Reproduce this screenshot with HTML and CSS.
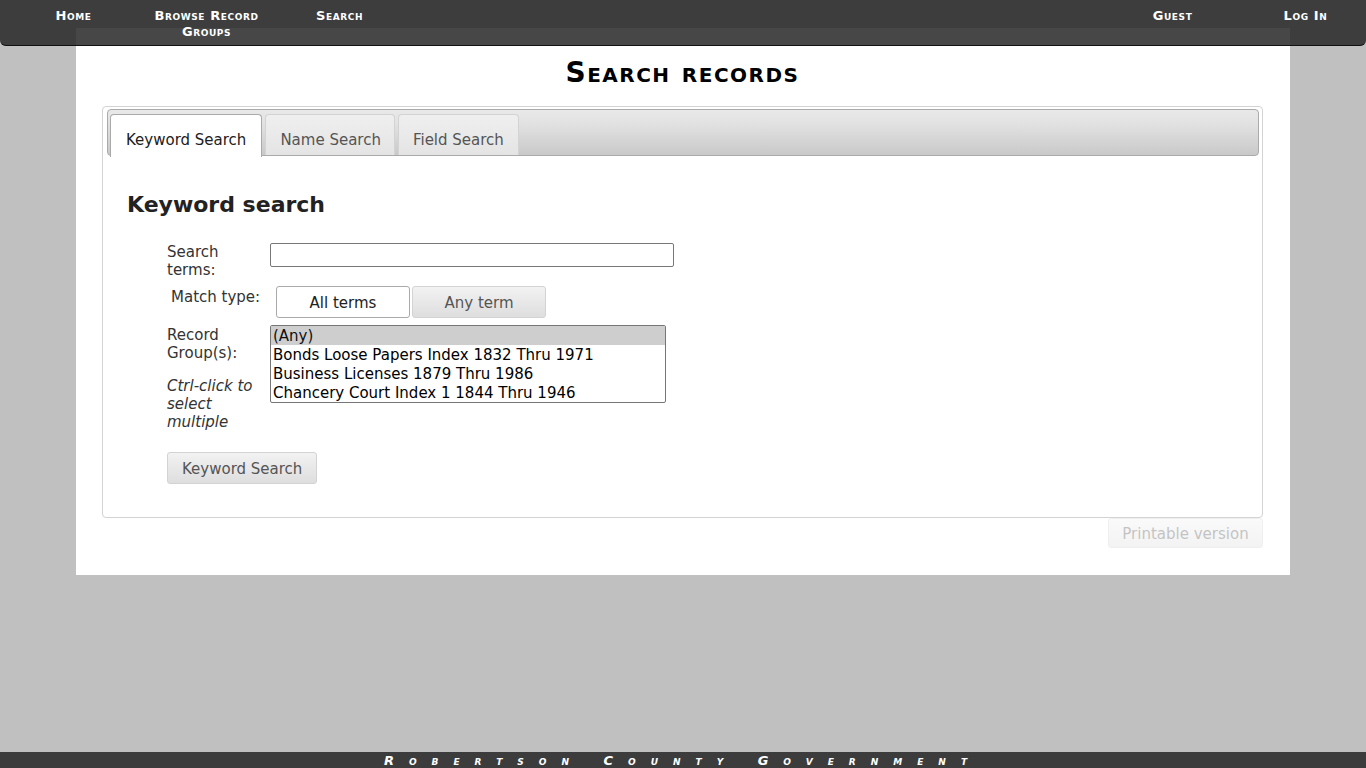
FILE: index.html
```html
<!DOCTYPE html>
<html lang="en">
<head>
<meta charset="utf-8">
<title>Search records</title>
<link rel="stylesheet" href="styles.css">
</head>
<body>
<nav class="topnav">
  <ul class="nav-left">
    <li><a href="#">Home</a></li>
    <li><a href="#">Browse Record Groups</a></li>
    <li><a href="#">Search</a></li>
  </ul>
  <ul class="nav-right">
    <li><a href="#">Guest</a></li>
    <li><a href="#">Log In</a></li>
  </ul>
</nav>

<main class="page">
  <h1 class="page-title">Search records</h1>

  <div class="tabs">
    <ul class="tab-bar">
      <li class="tab active"><a href="#">Keyword Search</a></li>
      <li class="tab tab-name"><a href="#">Name Search</a></li>
      <li class="tab"><a href="#">Field Search</a></li>
    </ul>
    <section class="tab-panel">
      <h2 class="panel-title">Keyword search</h2>
      <form class="search-form">
        <div class="row">
          <label class="label" for="terms">Search terms:</label>
          <input class="text-input" id="terms" type="text">
        </div>
        <div class="row row-match">
          <span class="label label-indent">Match type:</span>
          <div class="toggle">
            <button type="button" class="toggle-btn on">All terms</button>
            <button type="button" class="toggle-btn">Any term</button>
          </div>
        </div>
        <div class="row row-groups">
          <div class="label">
            <label for="groups">Record Group(s):</label>
            <p class="hint">Ctrl-click to select multiple</p>
          </div>
          <select class="listbox" id="groups" multiple size="4">
            <option selected>(Any)</option>
            <option>Bonds Loose Papers Index 1832 Thru 1971</option>
            <option>Business Licenses 1879 Thru 1986</option>
            <option>Chancery Court Index 1 1844 Thru 1946</option>
          </select>
        </div>
        <div class="row-submit">
          <button type="button" class="btn">Keyword Search</button>
        </div>
      </form>
    </section>
  </div>
  <div class="print-row">
    <button type="button" class="btn btn-disabled" disabled>Printable version</button>
  </div>
</main>

<footer class="footer">Robertson County Government</footer>
</body>
</html>
```

FILE: styles.css
```css
html, body {
  margin: 0;
  padding: 0;
}
body {
  background: #c0c0c0;
  font-family: "DejaVu Sans", Verdana, sans-serif;
  color: #222;
  min-height: 768px;
}

/* top navigation */
.topnav {
  position: absolute;
  top: 0;
  left: 0;
  right: 0;
  height: 45px;
  background: rgba(36, 36, 36, 0.84);
  border-bottom: 1px solid #111;
  border-radius: 0 0 6px 6px;
  display: flex;
  justify-content: space-between;
  z-index: 10;
}
.topnav ul {
  list-style: none;
  margin: 0;
  padding: 0;
  display: flex;
}
.nav-left { padding-left: 7px !important; }
.nav-right { margin-right: -6px !important; }
.topnav li {
  width: 133px;
  text-align: center;
  padding-top: 8px;
}
.topnav a {
  color: #fff;
  text-decoration: none;
  font-weight: bold;
  font-variant: small-caps;
  font-size: 13px;
  letter-spacing: 0.6px;
  line-height: 16px;
  display: inline-block;
  vertical-align: top;
  max-width: 125px;
}

/* page container */
.page {
  width: 1214px;
  margin: 28px auto 0;
  background: #fff;
  padding: 27px 27px 27px 26px;
  box-sizing: border-box;
}
.page-title {
  margin: 0 0 15px;
  text-align: center;
  font-size: 28px;
  letter-spacing: 1.5px;
  line-height: 36px;
  font-variant: small-caps;
  font-weight: bold;
  color: #000;
}

/* tabs */
.tabs {
  border: 1px solid #d3d3d3;
  border-radius: 4px;
  padding: 2px 3px 0 4px;
}
.tab-bar {
  list-style: none;
  margin: 0;
  padding: 4px 2px 0;
  height: 47px;
  box-sizing: border-box;
  display: flex;
  gap: 3px;
  border: 1px solid #aaa;
  border-radius: 4px;
  background: linear-gradient(#e9e9e9 0%, #e2e2e2 30%, #c9c9c9 100%);
}
.tab {
  height: 41px;
  box-sizing: border-box;
  border: 1px solid #d3d3d3;
  border-bottom: none;
  border-radius: 4px 4px 0 0;
  background: linear-gradient(#efefef, #e4e4e4);
  display: flex;
  align-items: center;
}
.tab a {
  color: #555;
  text-decoration: none;
  font-size: 15px;
  padding: 10px 14px 0;
}
.tab-name a {
  padding: 10px 13px 0 14px;
}
.tab.active {
  background: #fff;
  border-color: #aaa;
  height: 43px;
  position: relative;
}
.tab.active a {
  color: #212121;
  padding: 8px 15px 0;
}

.tab-panel {
  padding: 34px 24px 33px 20px;
}
.panel-title {
  margin: 0 0 23px;
  font-size: 22px;
  line-height: 30px;
  font-weight: bold;
  color: #222;
}

/* form */
.search-form {
  padding-left: 40px;
  font-size: 15px;
  color: #333;
}
.row {
  display: flex;
  align-items: flex-start;
}
.label {
  width: 103px;
  flex: none;
  line-height: 18px;
}
label.label {
  width: 95px;
  margin-right: 8px;
}
.label-indent {
  padding-left: 4px;
  width: 99px;
}
.text-input {
  width: 404px;
  height: 24px;
  box-sizing: border-box;
  border: 1px solid #777;
  border-radius: 2px;
  margin: 0;
  font: inherit;
}
.row-match {
  margin-top: 8px;
  height: 32px;
}
.row-match .label { padding-top: 1px; }
.toggle {
  display: flex;
  gap: 2px;
  margin-left: 6px;
  margin-top: -1px;
}
.toggle-btn {
  width: 134px;
  height: 32px;
  box-sizing: border-box;
  border: 1px solid #aaa;
  border-radius: 3px;
  background: #fff;
  color: #222;
  font: inherit;
  font-size: 15px;
  padding: 2px 0 0;
}
.toggle-btn:not(.on) {
  border-color: #d3d3d3;
  background: linear-gradient(#f2f2f2, #dedede);
  color: #555;
}
.row-groups {
  margin-top: 6px;
}
.row-groups .label { padding-top: 1px; }
.hint {
  margin: 15px 0 0;
  font-style: italic;
  width: 95px;
}
.listbox {
  width: 396px;
  height: 78px;
  box-sizing: border-box;
  border: 1px solid #767676;
  border-radius: 2px;
  margin: 0;
  padding: 0;
  font-size: 15px;
  color: #000;
  overflow: hidden;
  font-family: "DejaVu Sans", Verdana, sans-serif;
}
.listbox option {
  padding: 1px 2px 0;
  line-height: 18px;
  height: 19px;
  box-sizing: border-box;
}
.row-submit {
  margin-top: 21px;
}
.btn {
  height: 32px;
  box-sizing: border-box;
  padding: 2px 14px 0;
  border: 1px solid #d3d3d3;
  border-radius: 3px;
  background: linear-gradient(#f2f2f2, #dedede);
  color: #555;
  font-family: inherit;
  font-size: 15px;
}
.print-row {
  display: flex;
  justify-content: flex-end;
}
.btn-disabled {
  opacity: 0.35;
  width: 155px;
  height: 30px;
  padding: 1px 0 0;
}

/* footer */
.footer {
  position: fixed;
  left: 0;
  right: 0;
  bottom: 0;
  height: 16px;
  background: #3c3c3c;
  color: #fff;
  text-align: center;
  font-size: 13px;
  line-height: 17px;
  font-weight: bold;
  font-style: italic;
  font-variant: small-caps;
  letter-spacing: 15px;
  white-space: nowrap;
  overflow: hidden;
}
```
